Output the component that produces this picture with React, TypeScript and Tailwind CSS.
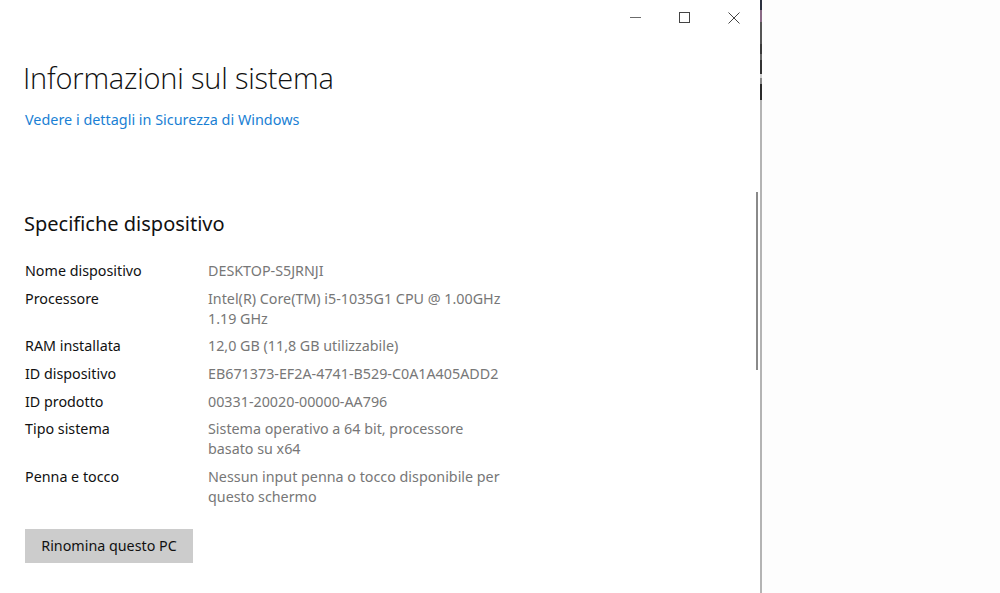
import React from "react";

const rows: { label: string; value: string[] }[] = [
  { label: "Nome dispositivo", value: ["DESKTOP-S5JRNJI"] },
  { label: "Processore", value: ["Intel(R) Core(TM) i5-1035G1 CPU @ 1.00GHz", "1.19 GHz"] },
  { label: "RAM installata", value: ["12,0 GB (11,8 GB utilizzabile)"] },
  { label: "ID dispositivo", value: ["EB671373-EF2A-4741-B529-C0A1A405ADD2"] },
  { label: "ID prodotto", value: ["00331-20020-00000-AA796"] },
  { label: "Tipo sistema", value: ["Sistema operativo a 64 bit, processore", "basato su x64"] },
  { label: "Penna e tocco", value: ["Nessun input penna o tocco disponibile per", "questo schermo"] },
];

export default function App() {
  return (
    <div
      className="flex w-[1000px] h-[593px] bg-white overflow-hidden"
      style={{ fontFamily: '"Noto Sans", "Open Sans", sans-serif' }}
    >
      {/* main window */}
      <div className="relative w-[760px] h-full flex flex-col">
        {/* title bar */}
        <div className="flex justify-end h-[35px]">
          <div className="w-[49px] h-full flex items-center justify-center">
            <svg width="11" height="11" viewBox="0 0 11 11">
              <line x1="0" y1="5.5" x2="11" y2="5.5" stroke="#6b6b6b" strokeWidth="1" />
            </svg>
          </div>
          <div className="w-[49px] h-full flex items-center justify-center">
            <svg width="11" height="11" viewBox="0 0 11 11">
              <rect x="0.5" y="0.5" width="10" height="10" fill="none" stroke="#444" strokeWidth="1" />
            </svg>
          </div>
          <div className="w-[49px] h-full flex items-center justify-center mr-[2px]">
            <svg width="12" height="12" viewBox="0 0 12 12">
              <path d="M0.5 0.5 L11.5 11.5 M11.5 0.5 L0.5 11.5" stroke="#444" strokeWidth="1" />
            </svg>
          </div>
        </div>

        <div className="pl-[23px] flex flex-col">
          <h1
            className="text-[29px] leading-[36px] font-light text-[#111] mt-[25px] tracking-[-0.2px]"
            style={{ fontFamily: '"Open Sans", "Noto Sans", sans-serif' }}
          >
            Informazioni sul sistema
          </h1>
          <a className="ml-[2px] mt-[14px] text-[14.4px] leading-[20px] text-[#1a7fd4]">
            Vedere i dettagli in Sicurezza di Windows
          </a>

          <h2 className="ml-[1px] mt-[80px] text-[20px] leading-[28px] text-[#111]">
            Specifiche dispositivo
          </h2>

          <div className="ml-[2px] mt-[23px] flex flex-col gap-[7.7px] text-[14.3px] leading-[20px]">
            {rows.map((r) => (
              <div key={r.label} className="flex">
                <div className="w-[183px] text-[#111]">{r.label}</div>
                <div className="flex flex-col text-[#777]">
                  {r.value.map((v) => (
                    <div key={v}>{v}</div>
                  ))}
                </div>
              </div>
            ))}
          </div>

          <div className="ml-[2px] mt-[22px]">
            <button className="w-[168px] h-[34px] bg-[#cccccc] text-[14.3px] text-[#111]">
              Rinomina questo PC
            </button>
          </div>
        </div>

        {/* scrollbar overlay */}
        <div className="absolute left-[756px] top-[192px] w-[2px] h-[178px] bg-[#8a8a8a]" />
      </div>

      {/* divider */}
      <div className="w-[2px] h-full flex flex-col">
        <div className="h-[10px] bg-[#2c3140]" />
        <div className="h-[12px] bg-[#8a6a86]" />
        <div className="h-[22px] bg-[#555]" />
        <div className="h-[10px] bg-[#3a3a3a]" />
        <div className="h-[6px] bg-[#666]" />
        <div className="h-[14px] bg-[#333]" />
        <div className="h-[4px] bg-[#cfcfcf]" />
        <div className="h-[6px] bg-[#888]" />
        <div className="h-[16px] bg-[#2a2a2a]" />
        <div className="flex-1 bg-[#b4b4b4]" />
      </div>

      {/* right area */}
      <div className="flex-1 h-full bg-[#fdfdfd]" />
    </div>
  );
}
